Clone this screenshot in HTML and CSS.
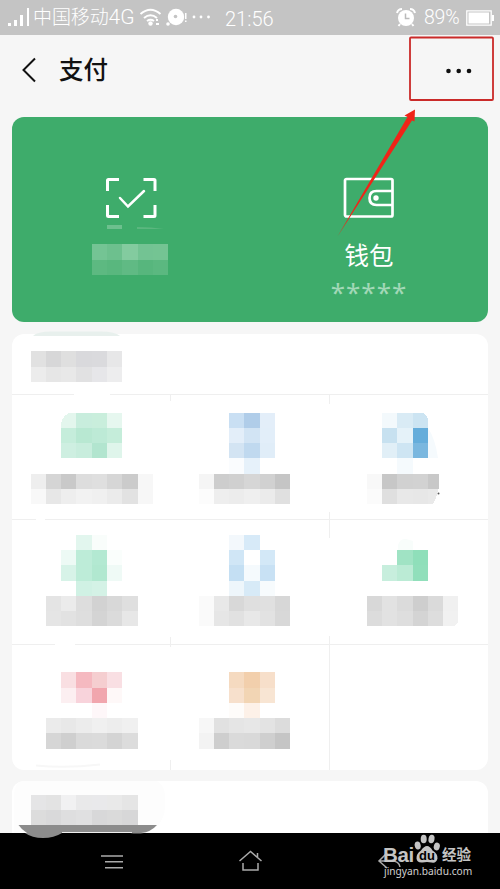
FILE: index.html
```html
<!DOCTYPE html>
<html lang="zh-CN">
<head>
<meta charset="utf-8">
<title>支付</title>
<link rel="stylesheet" href="styles.css">
</head>
<body>
<main class="screen">
  <header class="status">
    <svg class="signal" width="24" height="20" viewBox="0 0 24 20" fill="#fff"><path d="M1 15h3v3H1zM7 12h3v6H7zM13 7h3v11h-3zM20 0h2v18h-2z"/></svg>
    <span class="carrier">中国移动<span class="net">4G</span></span>
    <svg class="wifi" width="74" height="22" viewBox="138 7 74 22"><g fill="none" stroke="#fff" stroke-width="2"><path d="M140.500 14q10-8.500 20 0M144 18q6.500-5.500 13 0M147 21q3.500-2.500 7 0"/></g><g fill="#fff"><circle cx="150.500" cy="23.500" r="2.200"/><path d="M156 19h2v2h-2zM156 23h3v2h-3z"/><circle cx="176" cy="17" r="8.200"/><circle cx="168" cy="24" r="1.800"/><path d="M185 13h1.500v6H185zM185 20.500h1.500v1.500H185z"/><circle cx="194" cy="17" r="1.400"/><circle cx="201" cy="17" r="1.400"/><circle cx="208.500" cy="17" r="1.400"/></g><circle cx="175.500" cy="16.500" r="1.800" fill="#c4c4c4"/></svg>
    <span class="clock">21:56</span>
    <svg class="alarm" width="20" height="20" viewBox="0 0 20 20"><path d="M1 5q1-4 5-4M14 1q4 0 5 4" fill="none" stroke="#fff" stroke-width="2"/><circle cx="10" cy="10" r="8" fill="#fff"/><path d="M4 16l-1.500 2M16 16l1.500 2" stroke="#fff" stroke-width="2"/><path d="M9.500 5.500v5h4" fill="none" stroke="#bbb" stroke-width="1.500"/></svg>
    <span class="percent">89%</span>
    <svg class="battery" width="28" height="16" viewBox="0 0 28 16"><path d="M.8.800h24.400v14.400H.8z" fill="none" stroke="#fff" stroke-width="1.300"/><path d="M2.500 2.500h20.500v11H2.500zM26 5h2v6h-2z" fill="#fff"/></svg>
  </header>

  <nav class="title-bar">
    <svg class="back" width="16" height="26" viewBox="0 0 16 26"><path d="M14 1.500L2.500 13L14 24.500" fill="none" stroke="#111" stroke-width="2"/></svg>
    <h1>支付</h1>
    <div class="more"><svg width="28" height="6" viewBox="0 0 28 6" fill="#111"><circle cx="3.500" cy="3" r="2.300"/><circle cx="13.700" cy="3" r="2.300"/><circle cx="24" cy="3" r="2.300"/></svg></div>
  </nav>

  <section class="hero">
    <div class="hero-item">
      <svg width="238" height="205" viewBox="12 117 238 205">
        <g fill="none" stroke="#fff" stroke-width="3"><path d="M107.500 191v-10.500q0-1 1-1H119M143.500 179.500h10.500q1 0 1 1V191M155 205v10.500q0 1-1 1h-10.500M119 216.500h-10.500q-1 0-1-1V205"/><path d="M120 198l8 8.500L144 191" stroke-linecap="round" stroke-width="2.500"/></g>
        <path d="M107 225h15v4h-15z" fill="#6dc08e"/><path d="M137 227q14 0 27 2h-27z" fill="#5bb77f"/>
        <g class="mosaic" transform="scale(15.28)"><rect x="6" y="16" fill="#74c494"/><rect x="7" y="16" fill="#6dc08e"/><rect x="8" y="16" fill="#83cb9f"/><rect x="9" y="16" fill="#73c393"/><rect x="10" y="16" fill="#74c493"/><rect x="6" y="17" fill="#5db981"/><rect x="7" y="17" fill="#59b77e"/><rect x="8" y="17" fill="#60ba84"/><rect x="9" y="17" fill="#57b67d"/><rect x="10" y="17" fill="#5bb880"/></g>
      </svg>
    </div>
    <div class="hero-item wallet">
      <svg width="52" height="42" viewBox="0 0 52 42"><g fill="none" stroke="#fff" stroke-width="2.700"><rect x="2" y="2" width="47.500" height="37.500" rx="1.500"/><path d="M49 14H33.500q-7 0-7 7t7 7H49"/></g><circle cx="33" cy="21" r="2.700" fill="#fff"/></svg>
      <span class="wallet-name">钱包</span>
      <span class="stars">*****</span>
    </div>
  </section>

  <section class="card services">
    <div class="card-head">
      <svg width="476" height="60" viewBox="12 334 476 60">
        <path d="M33 336q4-4.500 18-4.500h50q14 0 19 4.500z" fill="#e8f0ed"/>
        <g class="mosaic" transform="scale(15.28)"><rect x="2" y="23" fill="#e1e1e1"/><rect x="3" y="23" fill="#d7d7d8"/><rect x="4" y="23" fill="#dfdfdf"/><rect x="5" y="23" fill="#d9d9dc"/><rect x="6" y="23" fill="#dadadd"/><rect x="7" y="23" fill="#e7e7e8"/><rect x="2" y="24" fill="#ececec"/><rect x="3" y="24" fill="#e6e6e6"/><rect x="4" y="24" fill="#e8e8e8"/><rect x="5" y="24" fill="#e1e1e2"/><rect x="6" y="24" fill="#e6e6e9"/><rect x="7" y="24" fill="#ededee"/></g>
      </svg>
    </div>
    <div class="tiles">
      <svg viewBox="12 394 159 125">
        <path class="line" d="M12 394.500H74M110 394.500H171M170.500 394v7"/>
        <g class="mosaic" transform="scale(15.28)"><path d="M4 28v-.35Q4.200 27 4.800 27H5v1z" fill="#e3f6ed"/><rect x="5" y="27" fill="#c8eddd"/><rect x="6" y="27" fill="#c9eedc"/><rect x="7" y="27" fill="#e6f7ef"/><rect x="4" y="28" fill="#c5eddb"/><rect x="5" y="28" fill="#b8e8d2"/><rect x="6" y="28" fill="#bdead6"/><rect x="7" y="28" fill="#c5edda"/><rect x="4" y="29" fill="#ceefe1"/><rect x="5" y="29" fill="#c8eddd"/><rect x="6" y="29" fill="#b2e5cf"/><rect x="7" y="29" fill="#dff5eb"/>
        <rect x="2" y="31" fill="#eee"/><rect x="3" y="31" fill="#d5d5d5"/><rect x="4" y="31" fill="#c9c9c9"/><rect x="5" y="31" fill="#ddd"/><rect x="6" y="31" fill="#dfdfdf"/><rect x="7" y="31" fill="#d6d6d6"/><rect x="8" y="31" fill="#cbcbcb"/><rect x="9" y="31" fill="#f7f7f7"/><rect x="2" y="32" fill="#f8f8f8"/><rect x="3" y="32" fill="#e7e7e7"/><rect x="4" y="32" fill="#eee"/><rect x="5" y="32" fill="#f2f2f2"/><rect x="6" y="32" fill="#f0f0f0"/><rect x="7" y="32" fill="#ebebeb"/><rect x="8" y="32" fill="#e2e2e2"/><rect x="9" y="32" fill="#f7f7f7"/></g>
      </svg>
      <svg viewBox="171 394 159 125">
        <path class="line" d="M171 394.500H330M329.500 394v10M329.500 512v7"/>
        <g class="mosaic" transform="scale(15.28)"><rect x="15" y="27" fill="#c9dff3"/><rect x="16" y="27" fill="#b0cde9"/><rect x="17" y="27" fill="#e3eef9"/><rect x="15" y="28" fill="#e3eef9"/><rect x="16" y="28" fill="#d2e4f4"/><rect x="17" y="28" fill="#e2eef9"/><rect x="15" y="29" fill="#d3e4f3"/><rect x="16" y="29" fill="#c0d9ef"/><rect x="17" y="29" fill="#e0edf8"/><rect x="15" y="30" fill="#fafcfe"/><rect x="16" y="30" fill="#e6f1fa"/>
        <rect x="13" y="31" fill="#f5f5f5"/><rect x="14" y="31" fill="#cdcdcd"/><rect x="15" y="31" fill="#d0d0d0"/><rect x="16" y="31" fill="#d6d6d6"/><rect x="17" y="31" fill="#d1d1d1"/><rect x="18" y="31" fill="#c5c5c5"/><rect x="13" y="32" fill="#fcfcfc"/><rect x="14" y="32" fill="#eee"/><rect x="15" y="32" fill="#ececec"/><rect x="16" y="32" fill="#efefef"/><rect x="17" y="32" fill="#ebebeb"/><rect x="18" y="32" fill="#e0e0e0"/></g>
      </svg>
      <svg viewBox="330 394 158 125">
        <path class="line" d="M330 394.500H488"/>
        <path d="M428 428q7 10 10 30h-10z" fill="#f5fafd"/>
        <g class="mosaic" transform="scale(15.28)"><rect x="25" y="27" fill="#f3f9fc"/><rect x="26" y="27" fill="#d9ebf5"/><path d="M27 27h.7l.3.35V28h-1z" fill="#cce4f2"/><rect x="25" y="28" fill="#c7e1f0"/><rect x="26" y="28" fill="#e5f2f9"/><rect x="27" y="28" fill="#65addb"/><rect x="25" y="29" fill="#e1eff7"/><rect x="26" y="29" fill="#cee5f3"/><rect x="27" y="29" fill="#7ab7df"/><rect x="26" y="30" fill="#f5fafd"/>
        <rect x="24" y="31" fill="#f8f8f8"/><rect x="25" y="31" fill="#c7c7c7"/><rect x="26" y="31" fill="#d1d1d1"/><rect x="27" y="31" fill="#d2d2d2"/><path d="M28 31h.7v1H28z" fill="#c8c8c8"/><rect x="24" y="32" fill="#fbfbfb"/><rect x="25" y="32" fill="#dfdfdf"/><rect x="26" y="32" fill="#e8e8e8"/><rect x="27" y="32" fill="#e7e7e7"/><path d="M28 32h.7l-.2.7-.2.300H28z" fill="#e9e9e9"/></g>
        <circle cx="438.500" cy="493.500" r="1" fill="#555"/>
      </svg>
      <svg viewBox="12 519 159 125">
        <path class="line" d="M12 519.500H36M45 519.500H171"/>
        <g class="mosaic" transform="scale(15.28)"><rect x="5" y="35" fill="#e2f6ee"/><rect x="6" y="35" fill="#f9fdfb"/><rect x="4" y="36" fill="#edfaf5"/><rect x="5" y="36" fill="#bdecd8"/><rect x="6" y="36" fill="#b3e9d2"/><rect x="7" y="36" fill="#fafefc"/><rect x="4" y="37" fill="#d7f3e8"/><rect x="5" y="37" fill="#bdecd8"/><rect x="6" y="37" fill="#b1e8d0"/><rect x="7" y="37" fill="#effaf6"/><rect x="5" y="38" fill="#d0f1e4"/><rect x="6" y="38" fill="#d4f2e6"/>
        <rect x="3" y="39" fill="#e4e4e4"/><rect x="4" y="39" fill="#ebebeb"/><rect x="5" y="39" fill="#ddd"/><rect x="6" y="39" fill="#d2d2d2"/><rect x="7" y="39" fill="#d8d8d8"/><rect x="8" y="39" fill="#dfdfdf"/><rect x="3" y="40" fill="#e5e5e5"/><rect x="4" y="40" fill="#e2e2e2"/><rect x="5" y="40" fill="#dedede"/><rect x="6" y="40" fill="#d4d4d4"/><rect x="7" y="40" fill="#dbdbdb"/><rect x="8" y="40" fill="#e7e7e7"/></g>
      </svg>
      <svg viewBox="171 519 159 125">
        <path class="line" d="M171 519.500H330M329.500 519v19M329.500 636v8"/>
        <g class="mosaic" transform="scale(15.28)"><rect x="15" y="35" fill="#f3f8fc"/><rect x="16" y="35" fill="#d7eaf8"/><rect x="15" y="36" fill="#d0e6f6"/><rect x="17" y="36" fill="#d3e8f7"/><rect x="15" y="37" fill="#c4dff3"/><rect x="16" y="37" fill="#f5fafd"/><rect x="17" y="37" fill="#c8e1f4"/><rect x="15" y="38" fill="#eef6fb"/><rect x="16" y="38" fill="#d7eaf7"/><rect x="17" y="38" fill="#f7fbfd"/>
        <rect x="13" y="39" fill="#fafafa"/><rect x="14" y="39" fill="#e8e8e8"/><rect x="15" y="39" fill="#d8d8d8"/><rect x="16" y="39" fill="#dfdfdf"/><rect x="17" y="39" fill="#e0e0e0"/><rect x="18" y="39" fill="#d7d7d7"/><rect x="13" y="40" fill="#fafafa"/><rect x="14" y="40" fill="#e6e6e6"/><rect x="15" y="40" fill="#e1e1e1"/><rect x="16" y="40" fill="#e8e8e8"/><rect x="17" y="40" fill="#e2e2e2"/><rect x="18" y="40" fill="#d8d8d8"/></g>
      </svg>
      <svg viewBox="330 519 158 125">
        <path class="line" d="M330 519.500H488"/>
        <path d="M398 545q2-7 8-6l7 2v9h-15z" fill="#f8fdfb"/>
        <g class="mosaic" transform="scale(15.28)"><rect x="26" y="36" fill="#a0e3c4"/><rect x="27" y="36" fill="#8fdfba"/><rect x="25" y="37" fill="#c7eedd"/><rect x="26" y="37" fill="#bbebd5"/><rect x="27" y="37" fill="#91dfbb"/>
        <rect x="24" y="39" fill="#d8d8d8"/><rect x="25" y="39" fill="#e2e2e2"/><rect x="26" y="39" fill="#dbdbdb"/><rect x="27" y="39" fill="#cecece"/><rect x="28" y="39" fill="#dadada"/><rect x="29" y="39" fill="#f0f0f0"/><rect x="24" y="40" fill="#dcdcdc"/><rect x="25" y="40" fill="#e2e2e2"/><rect x="26" y="40" fill="#dedede"/><rect x="27" y="40" fill="#d4d4d4"/><rect x="28" y="40" fill="#ddd"/><path d="M29 40h1v.6q-.1.400-.4.400H29z" fill="#f1f1f1"/></g>
      </svg>
      <svg viewBox="12 644 159 126">
        <path class="line" d="M12 644.500H55M75 644.500H171M170.500 637v10M170.500 760v10"/>
        <g class="mosaic" transform="scale(15.28)"><rect x="4" y="44" fill="#f9dfe2"/><rect x="5" y="44" fill="#f5b9c0"/><rect x="6" y="44" fill="#f5ced0"/><rect x="7" y="44" fill="#f9dfe3"/><rect x="4" y="45" fill="#fceff1"/><rect x="5" y="45" fill="#f8d3db"/><rect x="6" y="45" fill="#f1a6ae"/><rect x="7" y="45" fill="#fef8f8"/><rect x="6" y="46" fill="#fef7f9"/>
        <rect x="3" y="47" fill="#ebebeb"/><rect x="4" y="47" fill="#e8e8e8"/><rect x="5" y="47" fill="#ececec"/><rect x="6" y="47" fill="#f0f0f0"/><rect x="7" y="47" fill="#ededed"/><rect x="8" y="47" fill="#f0f0f0"/><rect x="3" y="48" fill="#d6d6d6"/><rect x="4" y="48" fill="#cfcfcf"/><rect x="5" y="48" fill="#dadada"/><rect x="6" y="48" fill="#dbdbdb"/><rect x="7" y="48" fill="#d4d4d4"/><rect x="8" y="48" fill="#dcdcdc"/></g>
        <path d="M36 765.500q30 3 64-1" fill="none" stroke="#f7f7f7" stroke-width="2"/>
      </svg>
      <svg viewBox="171 644 159 126">
        <path class="line" d="M171 644.500H330M329.500 644v126"/>
        <g class="mosaic" transform="scale(15.28)"><rect x="15" y="44" fill="#f5dac0"/><rect x="16" y="44" fill="#f2cfac"/><rect x="17" y="44" fill="#f7dfca"/><rect x="15" y="45" fill="#f7e0cc"/><rect x="16" y="45" fill="#f2d5b4"/><rect x="17" y="45" fill="#f8e5d3"/><rect x="15" y="46" fill="#fefcfa"/><rect x="16" y="46" fill="#fdf1e8"/>
        <rect x="13" y="47" fill="#f7f7f7"/><rect x="14" y="47" fill="#e1e1e1"/><rect x="15" y="47" fill="#e5e5e5"/><rect x="16" y="47" fill="#e7e7e7"/><rect x="17" y="47" fill="#e3e3e3"/><rect x="18" y="47" fill="#dcdcdc"/><rect x="13" y="48" fill="#f3f3f3"/><rect x="14" y="48" fill="#cecece"/><rect x="15" y="48" fill="#dadada"/><rect x="16" y="48" fill="#d9d9d9"/><rect x="17" y="48" fill="#cfcfcf"/><rect x="18" y="48" fill="#c5c5c5"/></g>
      </svg>
      <svg viewBox="330 644 158 126"><path class="line" d="M330 644.500H488"/></svg>
    </div>
  </section>

  <section class="card next">
    <svg width="476" height="52" viewBox="12 781 476 52">
      <path d="M14 833V795q0-14 12-16h124q14 2 15 16v12q0 10-8 20" fill="#fdfdfd"/>
      <g class="mosaic" transform="scale(15.28)"><rect x="2" y="52" fill="#e5e5e6"/><rect x="3" y="52" fill="#e3e3e3"/><rect x="4" y="52" fill="#f1f1f2"/><rect x="5" y="52" fill="#e9e9ea"/><rect x="6" y="52" fill="#e9e9eb"/><rect x="7" y="52" fill="#e9e9e9"/><rect x="8" y="52" fill="#e5e5e5"/><rect x="2" y="53" fill="#dcdcdc"/><rect x="3" y="53" fill="#d9d9da"/><rect x="4" y="53" fill="#dededf"/><rect x="5" y="53" fill="#e0e0e1"/><rect x="6" y="53" fill="#d8d8d9"/><rect x="7" y="53" fill="#dadada"/><rect x="8" y="53" fill="#d7d7d8"/></g>
      <path d="M18.500 825H157q-6 7-16 8H27q-6-4-8.500-8z" fill="#8c8c8c"/><path d="M62 832.500h70" stroke="#eee"/>
    </svg>
  </section>

  <footer class="system-nav">
    <svg width="500" height="56" viewBox="0 833 500 56">
      <path d="M25 833h37q-8 5-19 5t-18-5zM130 833h14q-7 1-14 0z" fill="#8c8c8c"/>
      <g fill="none" stroke="#aaa" stroke-width="1.500"><path d="M101 856h22M105 861.800h18M105 867.800h18"/><path d="M239.500 861L250.500 851.500L261.500 861M257.500 857v-4M243 863v7h15v-7"/><path d="M387 853l-8 8 8 7M380 861h12q7 0 8 6"/></g>
    </svg>
    <div class="watermark">
      <div class="brand"><span class="bai">Bai</span>
        <svg class="paw" width="26" height="30" viewBox="0 0 26 30"><g fill="#c4c4c4"><ellipse cx="3.700" cy="11.500" rx="3" ry="4" transform="rotate(-12 3.700 11.500)"/><ellipse cx="9.700" cy="5" rx="3" ry="4.300"/><ellipse cx="17.500" cy="5" rx="3" ry="4.300" transform="rotate(10 17.500 5)"/><ellipse cx="22.800" cy="12.500" rx="3" ry="4" transform="rotate(15 22.800 12.500)"/><path d="M13 12q3 0 5.500 4.500 5.500 3.500 5 8-1 5-6 4-4.500-1-9 0-5.500.500-6-4-.500-4.500 4.500-8Q10 12 13 12z"/></g><text x="13" y="25.500" text-anchor="middle">du</text></svg>
        <span class="jy">经验</span></div>
      <div class="url">jingyan.baidu.com</div>
    </div>
  </footer>

  <svg class="annotation" width="500" height="889" viewBox="0 0 500 889">
    <rect x="410" y="37.500" width="83" height="62.500" rx="1" fill="none" stroke="#ca2a29" stroke-width="1.800"/>
    <path d="M415 109.500L404.500 115.500L407.500 117L337.500 236.500L412 120.500L414.500 121.500z" fill="#f02418"/>
  </svg>
</main>
</body>
</html>
```
FILE: styles.css
```css
* { box-sizing: border-box; }
body { margin: 0; font-family: "Liberation Sans", "Noto Sans CJK SC", sans-serif; }
svg { display: block; flex: none; }
.screen { position: relative; width: 500px; height: 889px; overflow: hidden; background: #f6f6f6; display: flex; flex-direction: column; }
.status { height: 35px; flex: none; background: #c4c4c4; color: #fff; display: flex; align-items: center; padding-left: 7px; white-space: nowrap; font-family: Roboto, "Noto Sans CJK SC", sans-serif; font-weight: 300; }
.carrier { width: 102px; margin-left: 2px; font-size: 19px; letter-spacing: -.1px; line-height: 34px; }
.net { font-size: 21px; letter-spacing: 0; }
.wifi { margin-left: 3px; }
.clock { width: 50px; margin: 3px 0 0 13px; font-size: 20px; }
.alarm { margin-left: 121px; }
.percent { width: 37px; margin-left: 8px; font-size: 19.5px; letter-spacing: -.2px; }
.battery { margin-left: 5px; }
.title-bar { height: 82px; flex: none; display: flex; align-items: flex-start; padding: 22px 0 0 21px; }
h1 { margin: -5px 0 0 22px; font: 500 24.5px/34px "Noto Sans CJK SC", sans-serif; color: #111; }
.more { margin: 11px 27.5px 0 auto; }
.hero { height: 205px; flex: none; margin: 0 12px; border-radius: 12px; background: #3eac6b; display: flex; overflow: hidden; }
.hero-item { width: 238px; }
.wallet { display: flex; flex-direction: column; align-items: center; padding-top: 60px; color: #fff; }
.wallet-name { margin-top: 18px; font: 400 24.5px/36px "Noto Sans CJK SC", sans-serif; }
.stars { margin-top: 4px; font: 26px/30px "Noto Sans", sans-serif; letter-spacing: 1px; color: #a2d8b7; }
.card { flex: none; margin: 0 12px; background: #fff; }
.services { height: 436px; margin-top: 12px; border-radius: 12px; }
.card-head { height: 60px; }
.card-head svg { overflow: visible; }
.tiles { display: grid; grid-template-columns: 159px 159px 158px; grid-template-rows: 125px 125px 126px; }
.tiles svg { width: 100%; height: 100%; overflow: visible; }
.line { fill: none; stroke: #efefef; stroke-width: 1; }
.mosaic { shape-rendering: crispEdges; }
.mosaic rect { width: 1px; height: 1px; }
.next { height: 52px; margin-top: 11px; border-radius: 12px 12px 0 0; overflow: hidden; }
.system-nav { position: relative; height: 56px; flex: none; background: #000; }
.watermark { position: absolute; left: 383px; top: 0; width: 95px; color: #c4c4c4; }
.brand { display: flex; align-items: flex-end; height: 31px; }
.bai { width: 31px; font: 700 20.5px/19px "Liberation Sans", sans-serif; letter-spacing: -.4px; }
.paw { margin-top: 1px; }
.paw text { font: 700 13px "Liberation Sans", sans-serif; fill: #000; }
.jy { margin-left: 2px; font: 700 14.5px/20px "Noto Sans CJK SC", sans-serif; white-space: nowrap; }
.url { padding-left: 1px; font: 10.2px/14px "Noto Sans", sans-serif; white-space: nowrap; color: #d0d0d0; }
.annotation { position: absolute; left: 0; top: 0; pointer-events: none; }
```
